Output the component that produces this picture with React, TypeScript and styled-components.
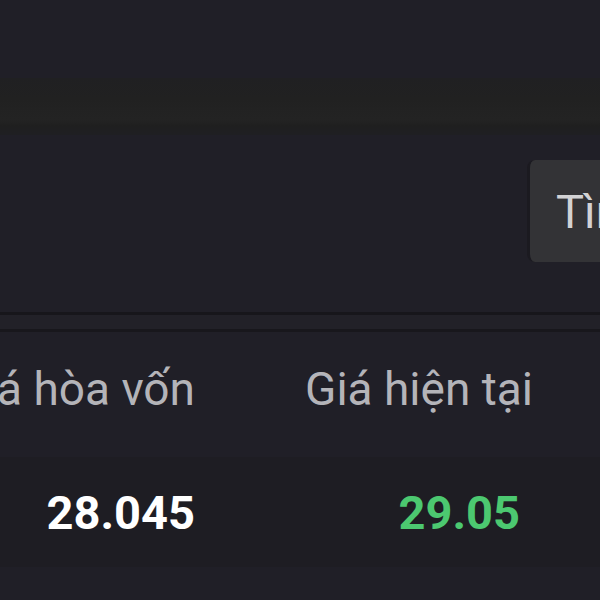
import React from 'react';
import styled, { createGlobalStyle } from 'styled-components';

const GlobalStyle = createGlobalStyle`
    html, body {
        margin: 0;
        padding: 0;
        background-color: #201f27;
    }
    body {
        font-family: Roboto, "Noto Sans", "Liberation Sans", sans-serif;
    }
`;

const Page = styled.div`
    width: 600px;
    height: 600px;
    overflow: hidden;
    background-color: #201f27;
    display: flex;
    flex-direction: column;
`;

const TopArea = styled.div`
    height: 78px;
    background-color: #201f27;
    flex-shrink: 0;
`;

const Strip = styled.div`
    height: 57px;
    flex-shrink: 0;
    background: linear-gradient(
        to bottom,
        #202022 0px,
        #212121 22px,
        #222222 30px,
        #232323 42px,
        #1f1f1f 48px,
        #1f1f23 57px
    );
`;

const SearchSection = styled.div`
    height: 177px;
    flex-shrink: 0;
    display: flex;
    justify-content: flex-end;
    align-items: flex-start;
    padding-top: 25px;
    box-sizing: border-box;
`;

const SearchButton = styled.button`
    flex-shrink: 0;
    width: 200px;
    height: 102px;
    margin-right: -127px;
    border: none;
    border-left: 3px solid #1b1a20;
    border-radius: 8px;
    background-color: #333336;
    color: #d2d2d4;
    font-family: Roboto, "Noto Sans", sans-serif;
    font-size: 47px;
    text-align: left;
    padding: 0 0 0 26px;
    white-space: nowrap;
`;

const Divider = styled.div`
    height: 20px;
    flex-shrink: 0;
    box-sizing: border-box;
    border-top: 3px solid #17161b;
    border-bottom: 3px solid #18171c;
    background-color: #222128;
`;

const Table = styled.div`
    margin-left: -40px;
    width: 640px;
    display: grid;
    grid-template-columns: 235px 338px 1fr;
`;

const Row = styled.div<{ $height: number; $bg: string }>`
    display: contents;

    & > div {
        height: ${(p) => p.$height}px;
        background-color: ${(p) => p.$bg};
    }
`;

const Cell = styled.div<{ $pad?: number }>`
    display: flex;
    align-items: center;
    justify-content: flex-end;
    padding-right: ${(p) => p.$pad || 0}px;
    white-space: nowrap;
    box-sizing: border-box;
`;

const HeaderText = styled.span`
    font-size: 46px;
    color: #b4b4b9;
    margin-top: -12px;
`;

const Value = styled.span<{ $color: string }>`
    font-size: 47px;
    font-weight: 700;
    color: ${(p) => p.$color};
`;

const Rest = styled.div`
    flex: 1;
    background-color: #201f27;
`;

const App = () => {
    return (
        <>
            <GlobalStyle />
            <Page>
                <TopArea />
                <Strip />
                <SearchSection>
                    <SearchButton>Tìm kiếm</SearchButton>
                </SearchSection>
                <Divider />
                <Table>
                    <Row $height={125} $bg="#201f27">
                        <Cell><HeaderText>Giá hòa vốn</HeaderText></Cell>
                        <Cell><HeaderText>Giá hiện tại</HeaderText></Cell>
                        <Cell />
                    </Row>
                    <Row $height={110} $bg="#1e1d23">
                        <Cell><Value $color="#ffffff">28.045</Value></Cell>
                        <Cell $pad={13}><Value $color="#4cc870">29.05</Value></Cell>
                        <Cell />
                    </Row>
                </Table>
                <Rest />
            </Page>
        </>
    );
};

export default App;
